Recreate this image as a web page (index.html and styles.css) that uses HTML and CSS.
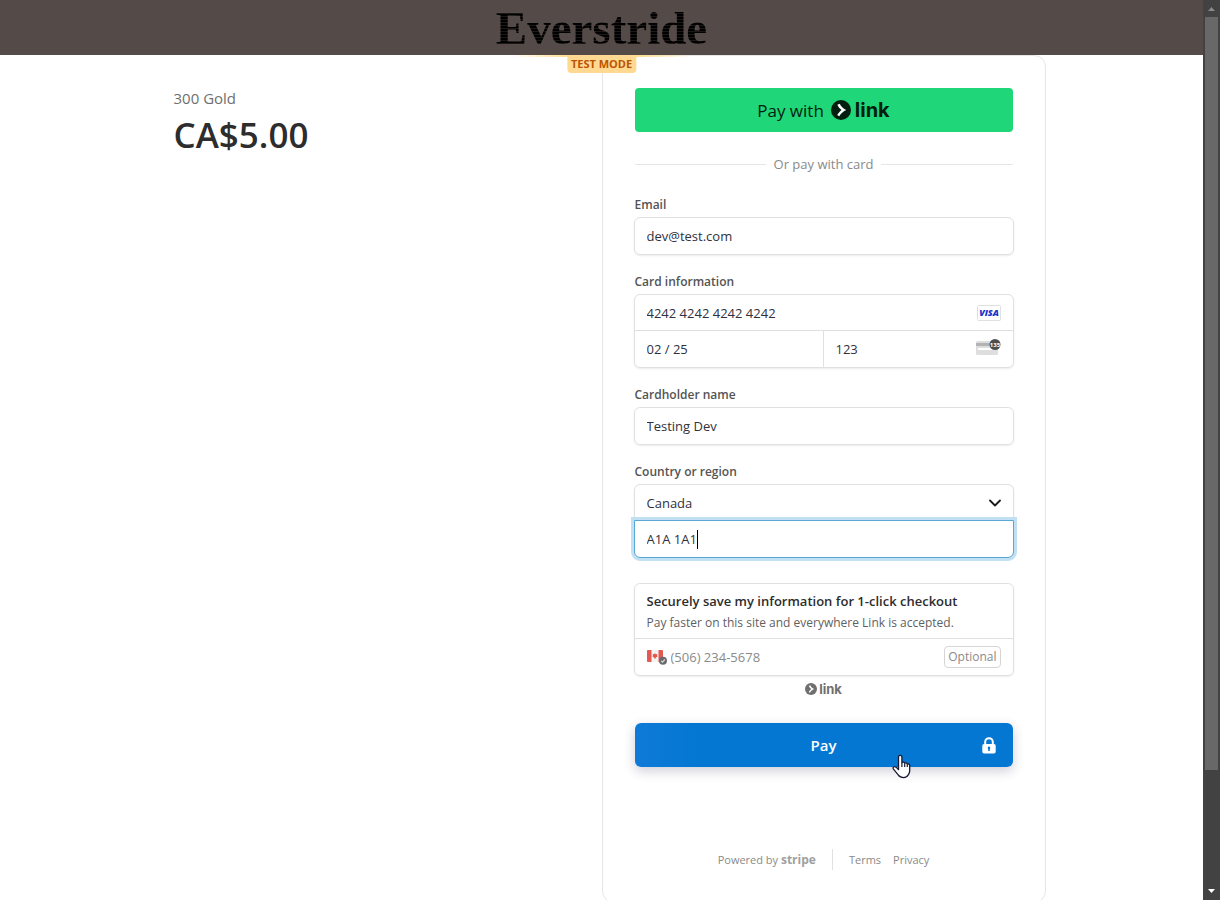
FILE: index.html
```html
<!DOCTYPE html>
<html lang="en">
<head>
<meta charset="utf-8">
<meta name="viewport" content="width=device-width, initial-scale=1">
<title>Everstride</title>
<link rel="stylesheet" href="styles.css">
</head>
<body>
<div class="page">
  <header class="banner">
    <div class="brand">Everstride</div>
    <div class="test-strip"></div>
    <div class="test-badge">TEST MODE</div>
  </header>
  <main class="checkout">
    <section class="summary">
      <div class="product">300 Gold</div>
      <div class="price">CA$5.00</div>
    </section>
    <section class="card">
      <form class="form">
        <button type="button" class="link-button">
          <span>Pay with</span>
          <svg class="link-mark" viewBox="0 0 20 20" aria-hidden="true"><circle cx="10" cy="10" r="10" fill="#011e0f"/><path d="M6.300 4.800L8.800 3.800C10 6.500 12 8.600 15.200 9.900 12 11.300 9.900 13.500 8.300 16.200L6.200 15C7.500 12.800 9 11 10.500 9.900 8.700 8.700 7.300 7 6.300 4.800z" fill="#fff"/></svg>
          <span class="link-word">link</span>
        </button>
        <div class="or"><span>Or pay with card</span></div>

        <div class="field">
          <label class="label" for="email">Email</label>
          <input class="input single" id="email" type="email" value="dev@test.com">
        </div>

        <div class="field">
          <label class="label" for="number">Card information</label>
          <div class="group">
            <div class="row">
              <input class="input" id="number" value="4242 4242 4242 4242">
              <svg class="visa" viewBox="0 0 24 16" aria-hidden="true"><rect x=".5" y=".5" width="23" height="15" rx="1" fill="#fff" stroke="#e0e0e0"/><text x="12" y="11" text-anchor="middle" class="visa-text">VISA</text></svg>
            </div>
            <div class="split">
              <input class="input" id="expiry" aria-label="Expiration" value="02 / 25">
              <div class="row divided">
                <input class="input" id="cvc" aria-label="CVC" value="123">
                <svg class="cvc" viewBox="0 0 25 17" aria-hidden="true"><rect y="2" width="22" height="14" rx="1.500" fill="#dedede"/><path d="M0 4h22v3H0z" fill="#b3b3b3"/><path d="M2 9h18v2H2z" fill="#fff"/><circle cx="19" cy="5.500" r="5.500" fill="#4d4d4d"/><text x="19" y="7.800" text-anchor="middle" class="cvc-text">135</text></svg>
              </div>
            </div>
          </div>
        </div>

        <div class="field">
          <label class="label" for="name">Cardholder name</label>
          <input class="input single" id="name" value="Testing Dev">
        </div>

        <div class="field">
          <label class="label" for="country">Country or region</label>
          <div class="group">
            <div class="row select-row">
              <select class="input select" id="country"><option>Canada</option></select>
              <svg class="chevron" viewBox="0 0 12 12" aria-hidden="true"><path d="M1 3.500l5 5 5-5" fill="none" stroke="#1a1a1a" stroke-width="1.800" stroke-linecap="round" stroke-linejoin="round"/></svg>
            </div>
            <div class="postal">
              <input class="input" id="postal" aria-label="Postal code" value="A1A 1A1" size="7">
              <span class="caret"></span>
            </div>
          </div>
        </div>

        <div class="group save">
          <div class="save-text">
            <strong class="save-title">Securely save my information for 1-click checkout</strong>
            <span class="save-note">Pay faster on this site and everywhere Link is accepted.</span>
          </div>
          <div class="phone">
            <svg class="flag" viewBox="0 0 20 16" aria-hidden="true"><rect y="1" width="16" height="12" rx="1" fill="#f3f3f3"/><path d="M1 1h3.500v12H1a1 1 0 0 1-1-1V2a1 1 0 0 1 1-1zM11.500 1H15a1 1 0 0 1 1 1v10a1 1 0 0 1-1 1h-3.500zM8 4l.8 1.300 1.600-.2-.4 1.500.7.700L8.400 9v1h-.8V9L5.300 7.300l.7-.7-.4-1.500 1.600.2z" fill="#e25950"/><circle cx="16" cy="11.700" r="4" fill="#6b6b6b"/><path d="M14.200 11.800l1.300 1.300 2.300-2.600" fill="none" stroke="#d8d8d8" stroke-width="1.200"/></svg>
            <input class="input phone-input" type="tel" aria-label="Phone number" placeholder="(506) 234-5678">
            <span class="optional">Optional</span>
          </div>
        </div>
        <div class="link-small">
          <svg class="link-mark-small" viewBox="0 0 20 20" aria-hidden="true"><circle cx="10" cy="10" r="10" fill="#6f6f6f"/><path d="M6.300 4.800L8.800 3.800C10 6.500 12 8.600 15.200 9.900 12 11.300 9.900 13.500 8.300 16.200L6.200 15C7.500 12.800 9 11 10.500 9.900 8.700 8.700 7.300 7 6.300 4.800z" fill="#fff"/></svg>
          <span>link</span>
        </div>

        <button type="button" class="pay">Pay
          <svg class="lock" viewBox="0 0 14 17" aria-hidden="true"><path d="M3.200 8V5a3.800 3.800 0 0 1 7.600 0v3" fill="none" stroke="#fff" stroke-width="2"/><path d="M2 7h10a1.700 1.700 0 0 1 1.700 1.700V14.800A1.700 1.700 0 0 1 12 16.500H2A1.700 1.700 0 0 1 .3 14.800V8.700A1.700 1.700 0 0 1 2 7zM7 9.600a1.300 1.300 0 0 0-.8 2.300V14h1.600v-2.100A1.300 1.300 0 0 0 7 9.600z" fill="#fff"/></svg>
          <svg class="pointer" viewBox="0 0 19 25" aria-hidden="true"><path d="M6.500 13V3a1.700 1.700 0 0 1 3.400 0v5.500c.8-.8 2.500-.5 2.800.6.900-.6 2.300-.2 2.600.9 1.200-.4 2.400.3 2.400 1.600V17c0 1.500-.7 2.700-1.400 3.800-.9 1.700-2.300 2.800-4.600 2.800-2.500 0-4.200-.7-5.300-2.400L1.500 15.200c-.8-1.300-.3-2.400.7-2.600 1.500-.3 3 1.200 4.300 3z" fill="#fff" stroke="#1a1a33" stroke-width="1.300" stroke-linejoin="round"/><path d="M9.900 8.500V13M12.700 9.300V13M15.300 10.200V13" stroke="#1a1a33" stroke-width="1.200"/></svg>
        </button>
      </form>
      <footer class="footer">
        <span class="powered">Powered by <b class="stripe">stripe</b></span>
        <nav class="legal"><a href="#">Terms</a><a href="#">Privacy</a></nav>
      </footer>
    </section>
  </main>
</div>
<div class="scrollbar" aria-hidden="true">
  <svg class="arrow" viewBox="0 0 17 17"><path d="M5 11h7L8.500 7z" fill="#8a8a8a"/></svg>
  <div class="track"><div class="thumb"></div></div>
  <svg class="arrow" viewBox="0 0 17 17"><path d="M5 6h7l-3.500 4z" fill="#fff"/></svg>
</div>
</body>
</html>
```
FILE: styles.css
```css
* { box-sizing: border-box; }
body {
  margin: 0;
  height: 100vh;
  display: flex;
  overflow: hidden;
  background: #fff;
  color: #30313d;
  font-family: "Open Sans", "Noto Sans", sans-serif;
  font-size: 13px;
}
button, input, select { font: inherit; color: inherit; }
svg { flex: none; display: block; }
.page { flex: 1; min-width: 0; display: flex; flex-direction: column; }

.banner {
  position: relative;
  flex: none;
  height: 55px;
  display: flex;
  align-items: center;
  justify-content: center;
  background: #544a47;
}
.brand {
  font-family: "Liberation Serif", serif;
  font-weight: 700;
  font-size: 47px;
  line-height: 52px;
  background: repeating-linear-gradient(#000 0 2px, #1c1817 2px 3px);
  background-clip: text;
  -webkit-background-clip: text;
  color: transparent;
}
.test-strip {
  position: absolute;
  z-index: 1;
  top: 100%;
  left: 50%;
  width: 180px;
  height: 2px;
  transform: translateX(-50%);
  background: linear-gradient(90deg, transparent, #ffde92 30%, #ffde92 70%, transparent);
}
.test-badge {
  position: absolute;
  z-index: 1;
  top: 100%;
  left: 50%;
  transform: translateX(-50%);
  padding: 0 4px;
  border-radius: 0 0 4px 4px;
  background: #ffd992;
  color: #bb5504;
  font-size: 11px;
  font-weight: 700;
  line-height: 18px;
  white-space: nowrap;
}

.checkout { flex: 1; display: grid; grid-template-columns: 1fr 1fr; }
.summary { width: 428px; max-width: 100%; justify-self: end; padding-top: 32px; }
.product { color: #6f6f6f; font-size: 15px; font-weight: 500; line-height: 22px; }
.price { color: #2d2d2d; font-size: 35px; font-weight: 600; line-height: 52px; }
.card {
  width: 444px;
  max-width: 100%;
  padding: 32px;
  border: 1px solid #e6e6e6;
  border-radius: 12px;
}
.form { display: flex; flex-direction: column; }
.link-button {
  display: flex;
  align-items: center;
  justify-content: center;
  height: 44px;
  padding: 0;
  border: 0;
  border-radius: 4px;
  background: #1fd678;
  color: #011e0f;
  font-size: 17px;
  font-weight: 500;
}
.link-mark { width: 20px; height: 20px; margin: 0 4px 0 7px; }
.link-word { font-family: Inter, sans-serif; font-size: 20px; font-weight: 700; }
.or {
  display: flex;
  align-items: center;
  gap: 8px;
  margin: 22px 0 21px;
  color: #8a8a8a;
  line-height: 20px;
}
.or::before, .or::after { content: ""; flex: 1; border-top: 1px solid #e6e6e6; }

.field { display: flex; flex-direction: column; gap: 2px; margin: 0 -1px 17px; }
.label { padding-left: 1px; color: #545454; font-size: 12px; font-weight: 600; line-height: 20px; }
.input {
  flex: 1;
  width: 100%;
  min-width: 0;
  height: 36px;
  padding: 0 12px;
  border: 0;
  outline: 0;
  background: transparent;
}
.input::placeholder { color: #8a8a8a; opacity: 1; }
.single, .group {
  border: 1px solid #e0e0e0;
  border-radius: 6px;
  box-shadow: 0 1px 2px rgba(0, 0, 0, .08);
}
.single { flex: none; height: 38px; }
.group { display: flex; flex-direction: column; }
.row { display: flex; align-items: center; padding-right: 12px; height: 35px; }
.split { display: grid; grid-template-columns: 1fr 1fr; border-top: 1px solid #e0e0e0; }
.divided { height: 36px; margin-left: -1px; border-left: 1px solid #e0e0e0; }
.visa { width: 24px; height: 16px; }
.visa-text { font: italic 800 9px "Open Sans", sans-serif; fill: #1434cb; }
.cvc { width: 25px; height: 17px; margin-bottom: 4px; }
.cvc-text { font: 700 6px "Open Sans", sans-serif; fill: #fff; }
.select { appearance: none; }
.select-row { position: relative; padding-right: 0; }
.chevron { position: absolute; right: 12px; width: 12px; height: 12px; pointer-events: none; }
.postal {
  display: flex;
  align-items: center;
  height: 38px;
  margin: 0 -1px -1px;
  border: 1px solid #58a9d6;
  border-radius: 0 0 6px 6px;
  box-shadow: 0 0 0 3px #c2e0f4;
}
.postal .input { flex: none; width: auto; field-sizing: content; padding-right: 0; }
.caret { width: 1px; height: 19px; background: #000; }

.save { margin: 8px -1px 0; }
.save-text { display: flex; flex-direction: column; padding: 7px 12px 5px; }
.save-title { font-weight: 600; line-height: 21px; color: #2d2d2d; }
.save-note { color: #5f5f5f; font-size: 12px; line-height: 21px; }
.phone { display: flex; align-items: center; border-top: 1px solid #e0e0e0; padding: 0 12px; }
.flag { width: 20px; height: 16px; }
.phone .phone-input { padding: 0 4px; }
.optional {
  padding: 0 3px;
  border: 1px solid #d5d5d5;
  border-radius: 4px;
  color: #8a8a8a;
  font-size: 12px;
  line-height: 20px;
}
.link-small {
  display: flex;
  align-items: center;
  justify-content: center;
  gap: 2px;
  margin-top: 3px;
  color: #6f6f6f;
  font: 700 13px/20px Inter, sans-serif;
}
.link-mark-small { width: 12px; height: 12px; }
.pay {
  position: relative;
  display: flex;
  align-items: center;
  justify-content: center;
  height: 44px;
  margin-top: 24px;
  border: 0;
  border-radius: 6px;
  background: linear-gradient(90deg, #0f7ad8, #0477d3 16%);
  box-shadow: 0 4px 12px rgba(50, 50, 93, .24);
  color: #fff;
  font-size: 15px;
  font-weight: 600;
}
.lock { position: absolute; right: 17px; width: 14px; height: 17px; }
.pointer { position: absolute; top: 31px; right: 102px; width: 19px; height: 25px; }
.footer {
  display: flex;
  align-items: center;
  justify-content: center;
  margin-top: 82px;
  color: #8a8a8a;
  font-size: 11px;
  line-height: 21px;
}
.powered { padding-right: 16px; border-right: 1px solid #e0e0e0; }
.stripe { color: #a0a0a0; font-size: 12px; }
.legal { display: flex; gap: 12px; padding-left: 16px; }
.legal a { color: inherit; text-decoration: none; }

.scrollbar { flex: none; width: 17px; display: flex; flex-direction: column; background: #424242; }
.arrow { width: 17px; height: 17px; }
.track { flex: 1; padding: 0 2px; }
.thumb { height: 87%; background: #686868; }
```
